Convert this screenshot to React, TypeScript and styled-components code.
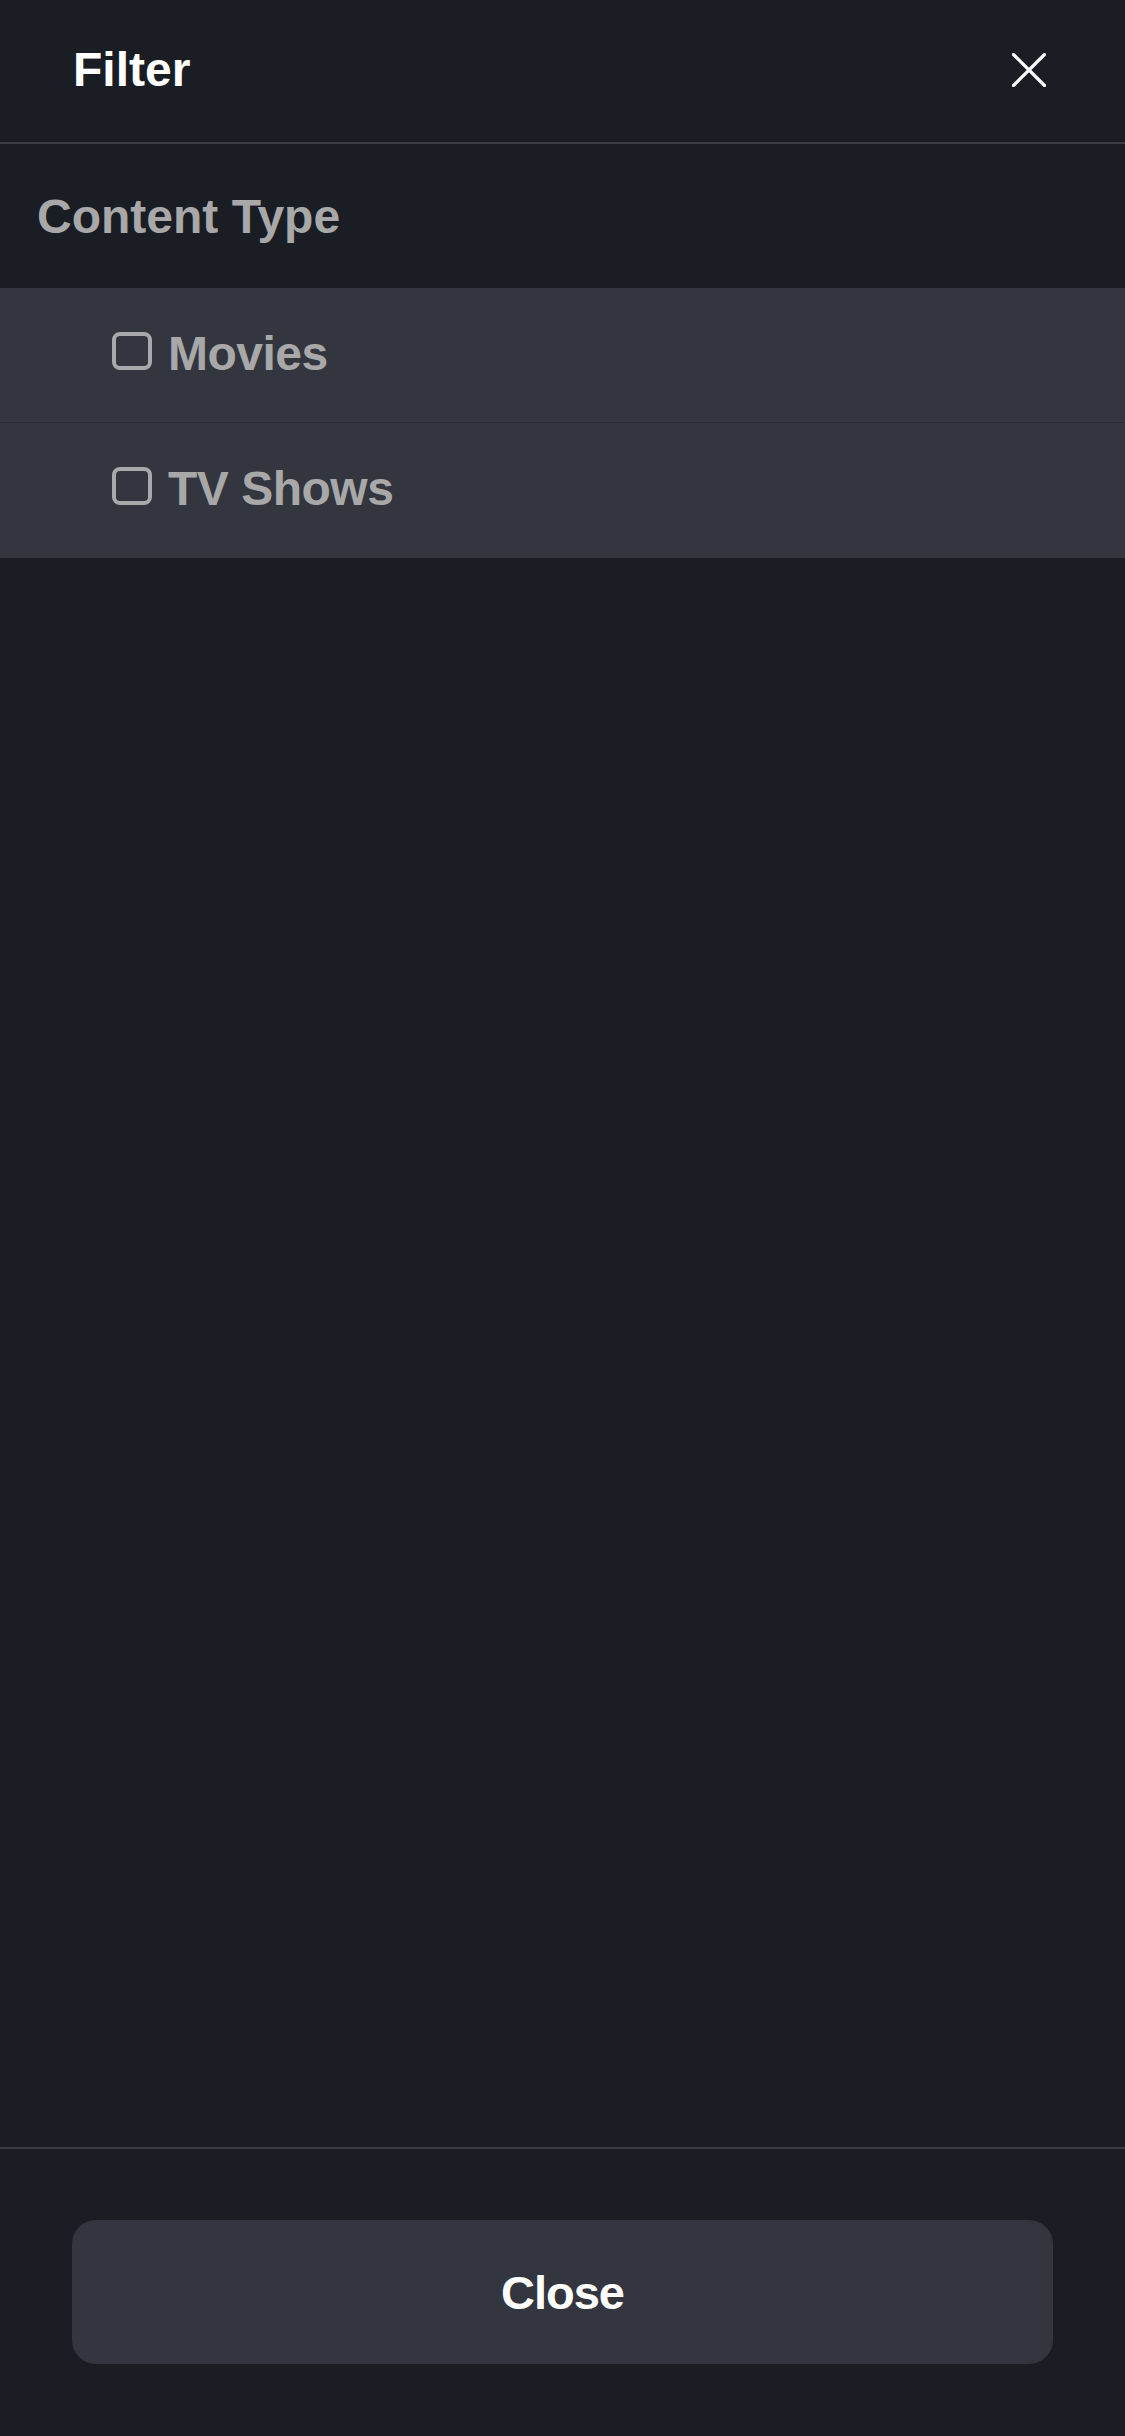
import React, { useState } from "react";
import styled, { createGlobalStyle } from "styled-components";

const GlobalStyle = createGlobalStyle`
  html, body {
    margin: 0;
    padding: 0;
    background: #1a1d24;
  }
  * { box-sizing: border-box; }
`;

const Sheet = styled.div`
  display: flex;
  flex-direction: column;
  width: 1125px;
  height: 2436px;
  background: #1a1d24;
  font-family: "Liberation Sans", Arial, sans-serif;
  font-weight: 700;
`;

const Header = styled.header`
  display: flex;
  align-items: center;
  justify-content: space-between;
  height: 144px;
  padding: 0 72px 2px 73px;
  border-bottom: 2px solid #393c43;
`;

const Title = styled.h1`
  margin: 0;
  font-size: 48px;
  line-height: 1;
  color: #ffffff;
  font-weight: 700;
`;

const IconButton = styled.button`
  display: flex;
  align-items: center;
  justify-content: center;
  width: 48px;
  height: 48px;
  padding: 0;
  border: none;
  background: transparent;
  cursor: pointer;
`;

const Body = styled.main`
  flex: 1;
  display: flex;
  flex-direction: column;
`;

const SectionTitle = styled.h2`
  display: flex;
  align-items: center;
  height: 144px;
  margin: 0;
  padding: 0 0 0 37px;
  font-size: 48px;
  font-weight: 700;
  color: #a8a8a8;
`;

const OptionList = styled.ul`
  list-style: none;
  margin: 0;
  padding: 0;
`;

const OptionRow = styled.li<{ $last?: boolean }>`
  display: flex;
  align-items: center;
  height: 135px;
  padding: 0 0 2px 112px;
  gap: 16px;
  background: #33363e;
  border-bottom: 1px solid ${(p) => (p.$last ? "#33363e" : "#2b2e35")};
  cursor: pointer;
`;

const Box = styled.span<{ $checked: boolean }>`
  display: flex;
  align-items: center;
  justify-content: center;
  width: 40px;
  height: 38px;
  margin-bottom: 6px;
  border: 4px solid #a8a9ab;
  border-radius: 8px;
  background: ${(p) => (p.$checked ? "#a8a9ab" : "transparent")};
`;

const OptionLabel = styled.span`
  font-size: 48px;
  line-height: 1;
  color: #a8a8a8;
  font-weight: 700;
  letter-spacing: -0.5px;
`;

const Footer = styled.footer`
  padding: 71px 72px 72px;
  border-top: 2px solid #393c43;
`;

const CloseButton = styled.button`
  display: flex;
  align-items: center;
  justify-content: center;
  width: 100%;
  height: 144px;
  border: none;
  border-radius: 24px;
  background: #33363e;
  color: #ffffff;
  font-family: "Liberation Sans", Arial, sans-serif;
  font-size: 47px;
  font-weight: 700;
  letter-spacing: -1px;
  cursor: pointer;
`;

const CloseIcon = () => (
  <svg width="34" height="34" viewBox="0 0 34 34" fill="none">
    <path d="M1.5 1.5 L32.5 32.5 M32.5 1.5 L1.5 32.5" stroke="#ffffff" strokeWidth="3.2" strokeLinecap="round" />
  </svg>
);

const options = ["Movies", "TV Shows"];

export default function App() {
  const [checked, setChecked] = useState<Record<string, boolean>>({});
  return (
    <>
      <GlobalStyle />
      <Sheet>
        <Header>
          <Title>Filter</Title>
          <IconButton aria-label="Close filter">
            <CloseIcon />
          </IconButton>
        </Header>
        <Body>
          <SectionTitle>Content Type</SectionTitle>
          <OptionList>
            {options.map((o, i) => (
              <OptionRow
                key={o}
                $last={i === options.length - 1}
                onClick={() => setChecked((c) => ({ ...c, [o]: !c[o] }))}
              >
                <Box $checked={!!checked[o]} />
                <OptionLabel>{o}</OptionLabel>
              </OptionRow>
            ))}
          </OptionList>
        </Body>
        <Footer>
          <CloseButton>Close</CloseButton>
        </Footer>
      </Sheet>
    </>
  );
}
